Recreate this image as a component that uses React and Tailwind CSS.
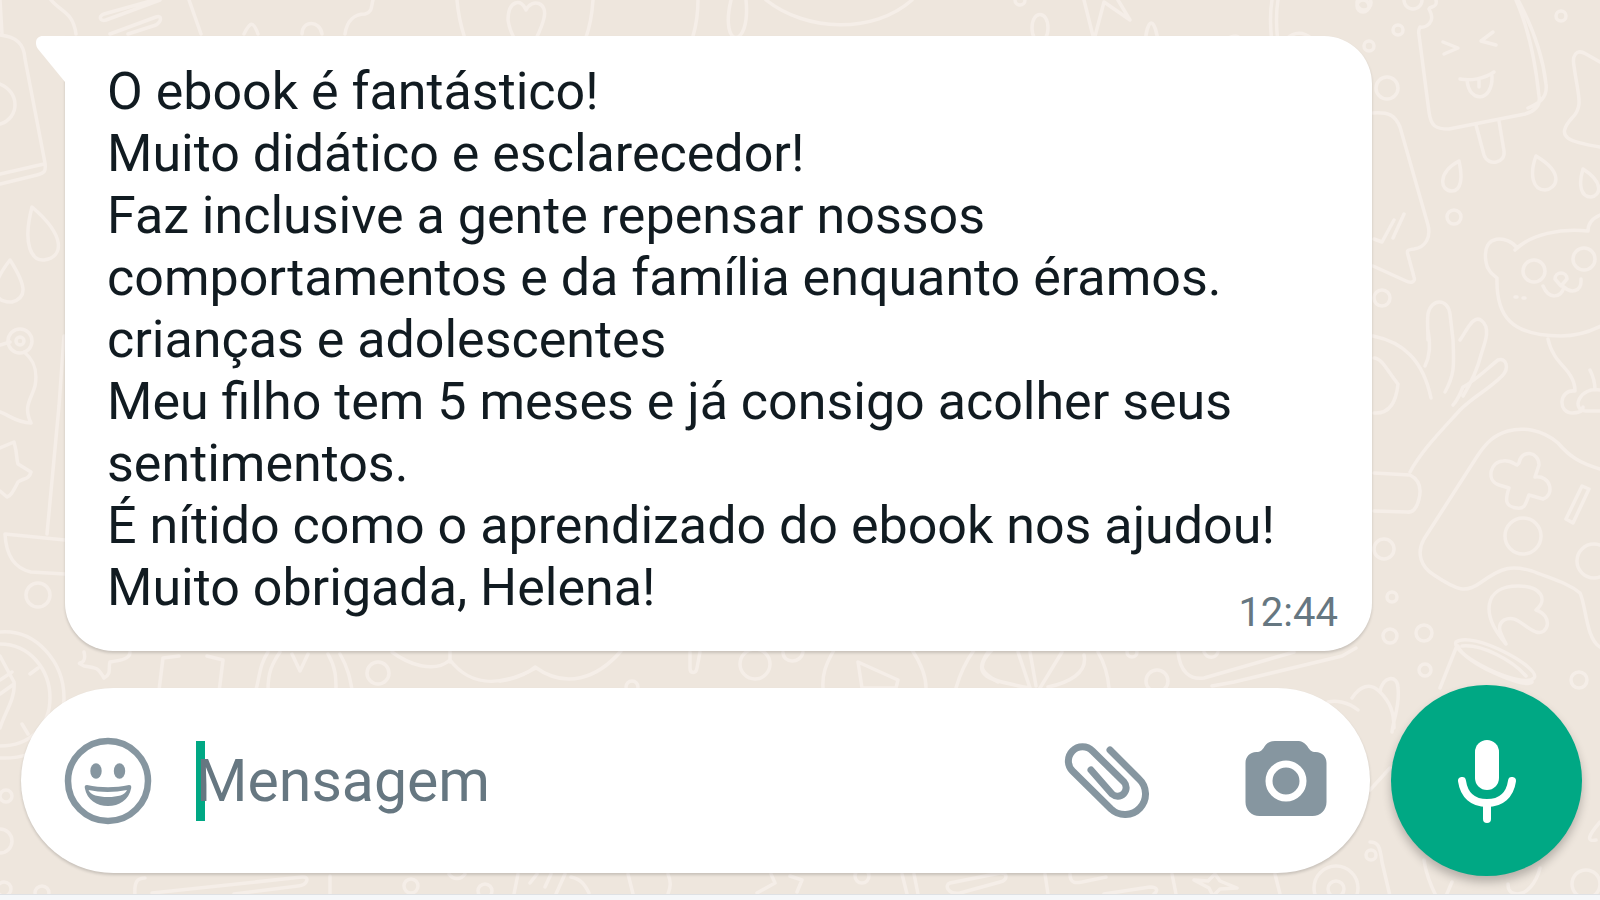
import React, { useState } from 'react';

const lines = [
  'O ebook é fantástico!',
  'Muito didático e esclarecedor!',
  'Faz inclusive a gente repensar nossos',
  'comportamentos e da família enquanto éramos.',
  'crianças e adolescentes',
  'Meu filho tem 5 meses e já consigo acolher seus',
  'sentimentos.',
  'É nítido como o aprendizado do ebook nos ajudou!',
  'Muito obrigada, Helena!',
];

// [cx, cy, r]
const dots = [
  [1364, 3, 7], [1413, 0, 9], [1398, 30, 5], [1369, 46, 5], [1387, 88, 11], [1561, 16, 5],
  [1454, 217, 7], [1382, 298, 8], [1534, 271, 11], [1584, 259, 11], [1523, 536, 18], [1594, 561, 17],
  [1384, 549, 10], [1392, 597, 5], [1390, 636, 7], [1424, 633, 8], [1425, 670, 6], [1579, 680, 8],
  [38, 595, 12], [20, 341, 12], [20, 341, 4], [378, 673, 11], [6, 796, 6], [0, 841, 12],
  [4, 889, 7], [42, 893, 7], [411, 886, 7], [485, 891, 7], [755, 664, 15], [632, 687, 6],
  [1157, 681, 11], [1132, 652, 5], [1336, 888, 22], [1336, 889, 8], [1586, 884, 14],
  [1371, 855, 5], [862, 876, 7], [1020, 0, 5], [1363, 6, 6],
];

const doodles = [
  // popsicle
  'M1436 0c2 8-6 6-7 9 8 14-4 19-9 18-1 3-2 3-1 8l10 77c2 14 6 17 20 17l76-15c10-3 16-8 14-18-4-38-11-69-23-96M1518 0c15 28 25 58 28 84 2 14-8 20-18 24',
  'M1476 125l8 30c4 12 22 8 20-4l-5-30M1443 42l15 6-14 6M1493 32l-12 9 15 4M1460 79c10 2 24 0 34-7M1467 80c2 24 26 22 25-4M1479 79v8',
  // drops
  'M1459 161c-22 12-19 30-7 30 9 0 11-13 7-30zM1536 156c30 18 20 33 9 34-12 0-16-15-9-34zM1583 169c22 14 17 27 8 28-10 0-13-12-8-28z',
  'M32 207c-10 38 0 54 12 53 20-3 22-24-12-53zM10 260c-28 36-8 43 2 42 14-4 16-14-2-42z',
  // bread and paper on the right
  'M1373 113c16-1 22 2 27 14l28 98c3 12-2 22-14 24-8 1-7 2-6 6l6 22c2 6-4 6-8 4l-33-15M1374 239l8 3 12-22M1404 214l-11 24',
  'M1600 62l-14-8c-10-6-14 2-12 12 4 30 10 40-2 52-18 20-2 24 28 29',
  // bear
  'M1517 248c-8-12-36-16-31 14 1 8 6 12 11 16-1 38 14 58 64 58 14 0 28-4 40-10M1515 250c16-16 46-22 73-19 0-8 5-13 12-16M1543 286c6 14 18 12 21 1 6 6 18 6 17-8M1555 279c0-8 12-8 12 0l-6 7zM1515 297h2M1523 298h2',
  'M1548 339c4 20 18 28 22 36 4 6 5 12 5 16-16-2-18 22-2 22 8-1 10-2 10-6M1600 390c-20-4-30 20-14 21h14M1590 370c4 8 5 12 5 20',
  // hand
  'M1428 340c0-10-1-18 0-26 3-16 20-16 22 0l3 26M1460 340c8-12 14-26 22-19 10 8 1 26-1 34-4 16-10 28-18 41M1428 330c2 10 3 24-3 36M1453 340c1 24 2 34-8 52M1453 405c4-4 6-8 10-18 12-6 26-20 35-27 8-3 12 8 4 16-14 14-28 20-42 34-18 20-38 40-50 62',
  'M1373 336c30 6 50 24 58 62M1374 358c8 0 14 14 24 26-2 20-10 30-24 29M1374 473l36 2c8 4 12 12 9 24-2 8-6 14-12 13l-33-1',
  // gamepad
  'M1600 469c-20-6-30-12-42-26-16-14-36-16-50-12-14 4-22 12-30 24l-54 84c-8 14-3 28 10 36 24 16 32 18 46 8 22-16 32-18 52-12 20 8 36 12 48 22 6 12 6 46 20 54',
  'M1519 463c2-14 20-12 20 2l-4 12c16-2 20 18 8 22l-14-4c-4 10-4 14-12 13-12-1-12-8-8-20l-10-3c-14-5-8-24 4-24 6-1 10 2 14 4zM1582 486l7 3-16 34-7-4z',
  // mushroom
  'M1506 644c-26-30-22-58 12-58 24 0 30 14 18 24 18 6 12 26 0 22-14-6-20-18-32-12-8 6-4 12 2 24z',
  'M1456 642c-6 12 66 48 78 36 8-10-62-48-78-36zM1456 648l-16 40M1532 682c-6 8-70-20-74-36M1462 646c20-2 50 14 64 30',
  // top row
  'M51 0c10 12 22 12 25 34M189 0l12 34M154 0l-50 14c-6 2-4 8 2 6l54-20M110 34l46-17c6-2 6 4 0 8l-28 9M244 34c6-12 9-14 14 0M302 34c0-14 18-14 20 0M345 34c2-14 10-20 20-20 8-2 6-8 8-14',
  'M0 35c16 2 24 8 25 24l20 104c1 8 0 10-8 12L0 184M0 174l44-10M0 84c20 8 20 34 0 40M0 0l2 34',
  'M508 20c0-20 14-22 18-10 6-12 22-8 18 8-3 14-11 24-16 40-12-16-18-24-20-38zM457 0c2 24 10 50 22 68M593 0c-2 32-12 54-24 68M698 0c0 32-10 50-18 68',
  'M731 0c-12 50 20 50 15 0M766 0c40 32 108 34 146 0M924 68c0-20 2-32 12-28l66 16c8 2 8 6 4 12M1084 0l10 40 10-38 26 18-12-20M1144 68c0-60 14-60 16 0M1208 68c8-28 30-40 34-26l-5 26M1272 0c-4 24 0 48 4 68M1278 0c-4 24 0 48 4 68M1282 46c10-22 38-16 42 22M1032 28c0-18 16-18 16 0s-16 18-16 0z',
  // left side
  'M0 345l10-3M24 352c10 8 14 18 11 34-4 14-12 20-4 37-14 0-22-8-31-11M0 448l14-6c4 14 2 16 4 22l13 8c-2 8-8 6-13 10-6 12-8 14-11 15l-7-6M64 336l-5 70-12 128M65 540l-60-6c1 20 8 34 26 38l34 2',
  // clock
  'M0 632c36-3 64 30 64 66s-24 62-64 60M0 644c30 0 50 26 50 54s-20 48-50 48M0 656l14 26c2 16-10 32-14 46M38 668l-8 6M22 724l6 10M0 680l12-8M0 694l14-10',
  // between the bubble and the input
  'M84 652c4 16-12 8 0 14 14 2 14 2 20 12 8-4 4-10 6-16 14-2 20-4 20-10M159 690l4-32 16-2M207 656l16 4-4 32M256 690c4-16 4-26 12-38M268 690c0-18 4-26 12-38M292 654l8 17 8-17M328 654c8 14 8 24 8 36M340 654c8 14 10 24 12 36M392 652c16 12 42 22 58 8 20 26 48 28 86 8M450 650v12',
  'M500 681c16-2 28-8 35-14 30 22 62 12 86-16M690 652v16c0 6 6 6 7 0l3-16M783 652c0 12 18 12 20 0M834 650c-8 14-12 24-11 38M912 650c8 12 14 24 14 38M858 662l40 18-2 8h-34zM974 650c-10 14-14 24-18 38M992 650c-18 18-8 24 6 32',
  'M988 652c-16 24-2 28 42 36M1018 652l12 36M1030 652l6 34M1062 652l-22 36M1084 655c4 18-16 28-36 32M1098 652c8 14 10 24 11 36M1178 652c2 20 12 28 26 26l90-26M1356 648l-14 8-108 26-22 4M1204 652c4 8 12 6 14 0',
  'M1328 702c8-2 20 0 30 8M1352 698c8-12 18-16 28-6 2-16 18-18 18-4 2 18-4 28-6 44M1380 692c10 10 14 20 14 36M1370 790l20-22',
  // bottom row
  'M135 896c-1-14 2-18 10-18M152 893l150-16c8-1 6 8-4 9l-64 8M330 876v20M449 874c4 6 12 6 16 0M518 874l-4 20M537 874l-7 9M551 874l-6 13M565 874l-9 20M571 877c10 2 14 8 18 16M628 874l5 20M668 874c3 8 3 12 0 20M757 893l18-10-4-9M790 876l12 4-5 12',
  'M902 874l5 20M914 874l4 20M950 883l50-10c8-1 8 7 0 9l-40 11c-12 2-16-8-10-10zM1045 874l3 20M1070 874c0 10 6 9 12 8l24-5M1104 894l46-7c8 0 8 4 4 7M1172 874l4 20M1194 880l14 1 7-7 5 7 17 7-17 1-7 7-4-8zM1275 874l5 20M1382 862l8 34M1370 842c8 0 10 4 12 20M1424 860c2 14 6 24 12 36M1446 896l6-14M1508 884c0 6 2 10 10 10s18-10 22-26M1600 822c-12 14-14 20-4 18',
];

const Wallpaper = () => (
  <svg
    className="absolute inset-0 h-full w-full"
    viewBox="0 0 1600 900"
    preserveAspectRatio="xMidYMid slice"
    fill="none"
    stroke="#f5eee8"
    strokeWidth="3.5"
    strokeLinecap="round"
    strokeLinejoin="round"
    aria-hidden="true"
  >
    {dots.map(([cx, cy, r], i) => (
      <circle key={i} cx={cx} cy={cy} r={r} />
    ))}
    {doodles.map((d, i) => (
      <path key={i} d={d} />
    ))}
  </svg>
);

const SmileIcon = () => (
  <svg className="h-22 w-22" viewBox="0 0 88 88" fill="#8696a0" aria-hidden="true">
    <circle cx="44" cy="44" r="40" fill="none" stroke="#8696a0" strokeWidth="6.5" />
    <ellipse cx="32" cy="34" rx="5.7" ry="7.7" />
    <ellipse cx="55.5" cy="34" rx="5.7" ry="7.7" />
    <path d="M23 48c14 3 28 3 42 0 2 0 2.500 1 2.200 3C65 63 55 69 44 69S23 63 20.800 51c-.3-2 .2-3 2.200-3z" />
    <path d="M24.500 53c12 2.500 26 2.500 38.500 0-2 5-9 7-19 7s-17.500-2-19.500-7z" fill="#fff" />
  </svg>
);

const ClipIcon = () => (
  <svg
    className="h-20 w-22"
    viewBox="0 0 88 80"
    fill="none"
    stroke="#8696a0"
    strokeWidth="7"
    strokeLinecap="round"
    strokeLinejoin="round"
    aria-hidden="true"
  >
    <path d="M48 9l29 29a20 20 0 0 1-28 30L10.500 30A14 14 0 0 1 30.500 10L62 41a8.500 8.500 0 0 1-12 12L29 29" />
  </svg>
);

const CameraIcon = () => (
  <svg className="h-20 w-21" viewBox="0 0 84 80" aria-hidden="true">
    <path
      fill="#8696a0"
      d="M31 0h22c5 0 8 2 10.500 5.500 2.500 4 4 5.500 8 5.500 7 0 11 5 11 11v39c0 8-6 14-14 14h-53c-8 0-14-6-14-14V22c0-6 4-11 11-11 4 0 5.500-1.500 8-5.500C23 2 26 0 31 0z"
    />
    <circle cx="42" cy="40" r="17" fill="none" stroke="#fff" strokeWidth="7" />
  </svg>
);

const MicIcon = () => (
  <svg className="h-21 w-15" viewBox="0 0 60 84" fill="none" stroke="#fff" strokeLinecap="round" aria-hidden="true">
    <rect x="18" y="1" width="24" height="50" rx="12" fill="#fff" stroke="none" />
    <path d="M5 42c2 14 11 22 25 22s23-8 25-22" strokeWidth="8" />
    <path d="M30 64v16" strokeWidth="8" />
  </svg>
);

const Message = () => (
  <article className="relative mr-[228px] ml-[65px] rounded-[48px] rounded-tl-none bg-white px-[42px] pt-[25px] pb-8 shadow-[0_2px_3px_rgba(0,0,0,0.16)]">
    <svg className="absolute top-0 -left-[29px] h-[46px] w-[30px]" viewBox="0 0 30 46" aria-hidden="true">
      <path d="M30 0H7C0 0-2 7 2 13l27 33h1z" fill="#fff" />
    </svg>
    <p className="text-[52px] leading-[62px] text-[#111b21]">
      {lines.map((line) => (
        <span key={line} className="block">
          {line}
        </span>
      ))}
    </p>
    <time className="absolute right-[34px] bottom-[15px] text-[40px] leading-[46px] text-[#667781]">12:44</time>
  </article>
);

const Composer = () => {
  const [text, setText] = useState('');

  return (
    <form className="flex items-center gap-[21px] pr-[18px] pl-[21px]" onSubmit={(e) => e.preventDefault()}>
      <div className="flex h-[185px] min-w-0 flex-1 items-center rounded-full bg-white pr-[42px] pl-[43px] shadow-[0_2px_3px_rgba(0,0,0,0.16)]">
        <button type="button" aria-label="Emoji">
          <SmileIcon />
        </button>
        <div className="relative ml-11 flex min-w-0 flex-1 items-center">
          {!text && <span className="absolute left-0 h-20 w-[9px] bg-[#00a884]" />}
          <input
            type="text"
            aria-label="Mensagem"
            placeholder="Mensagem"
            value={text}
            onChange={(e) => setText(e.target.value)}
            className="relative w-full bg-transparent text-[59px] leading-[82px] text-[#111b21] caret-[#00a884] outline-none placeholder:text-[#667781]"
          />
        </div>
        <button type="button" aria-label="Anexar" className="mr-[94px]">
          <ClipIcon />
        </button>
        <button type="button" aria-label="Câmera">
          <CameraIcon />
        </button>
      </div>
      <button
        type="button"
        aria-label="Gravar áudio"
        className="flex h-[191px] w-[191px] items-center justify-center rounded-full bg-[#00a884] shadow-[0_6px_10px_rgba(0,0,0,0.24)]"
      >
        <MicIcon />
      </button>
    </form>
  );
};

export default function App() {
  return (
    <main className="relative flex min-h-screen flex-col overflow-hidden bg-[#eee6dd] font-[Roboto,sans-serif]">
      <Wallpaper />
      <div className="relative flex flex-1 flex-col justify-between pt-9 pb-[18px]">
        <Message />
        <Composer />
      </div>
      <div className="relative h-[6px] border-t border-[#dfe1e4] bg-[#f5f7f9]" />
    </main>
  );
}
